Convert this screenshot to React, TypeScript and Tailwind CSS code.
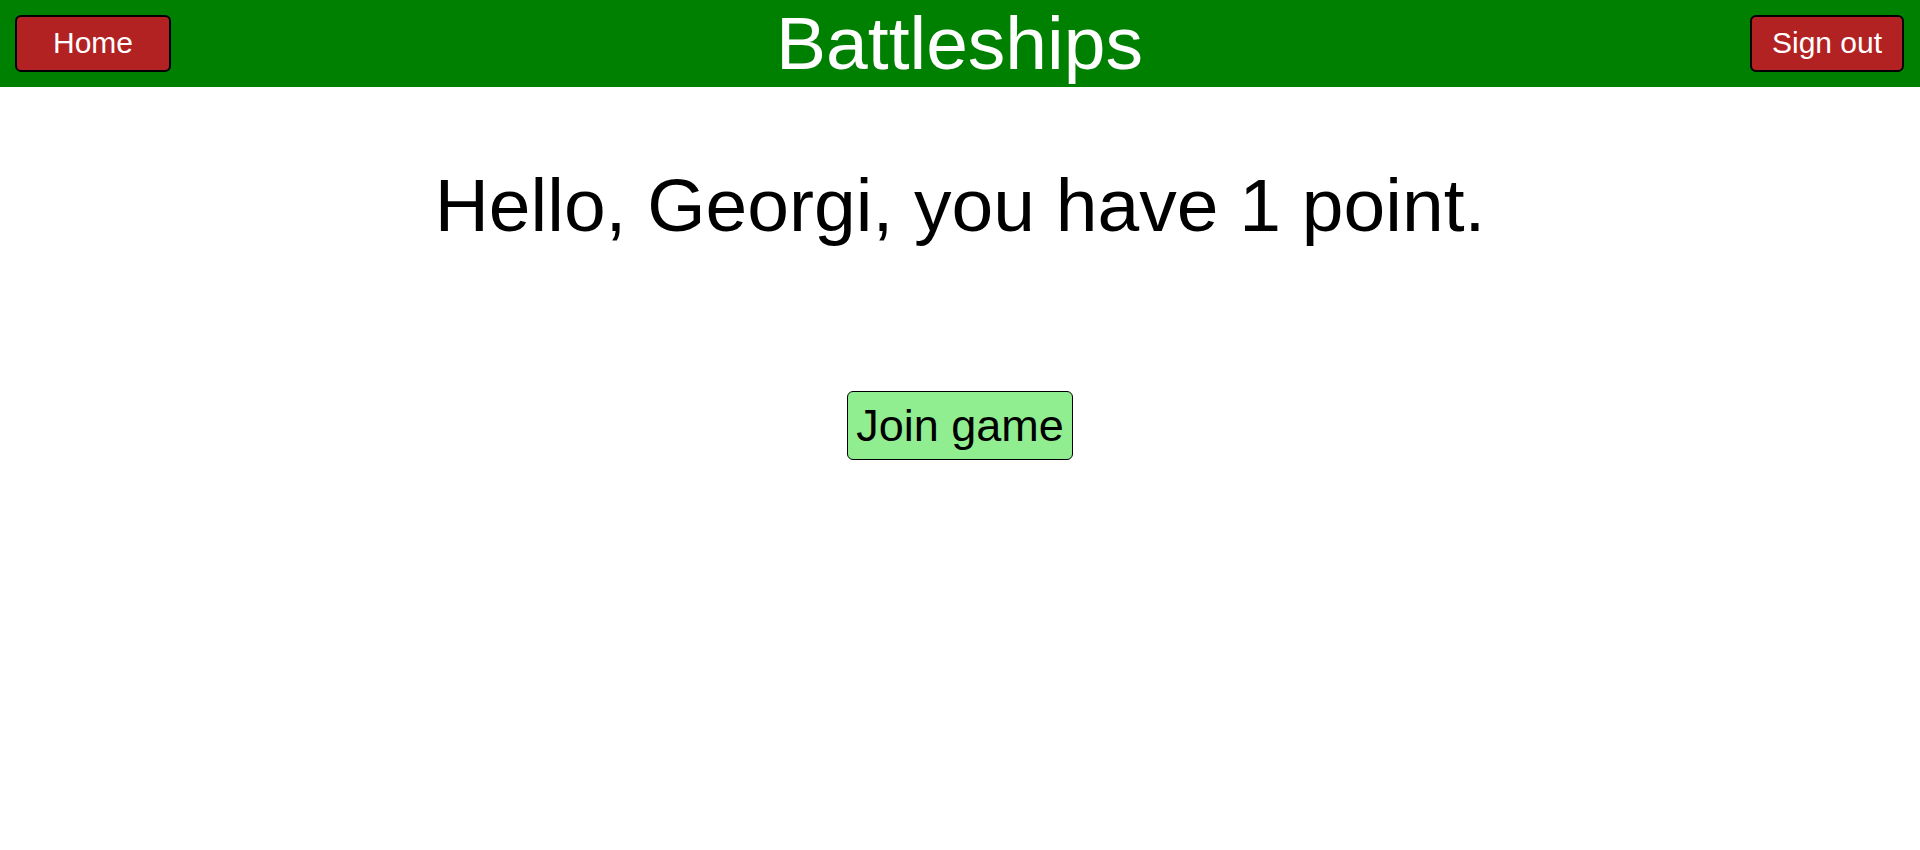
export default function App() {
  return (
    <div className="min-h-[850px] bg-white font-['Liberation_Sans',Arial,sans-serif]">
      <header className="grid h-[87px] grid-cols-[1fr_auto_1fr] items-center bg-[#008000] pl-[15px] pr-[16px]">
        <div className="flex justify-start">
          <button className="flex h-[57px] w-[156px] items-center justify-center rounded-[6px] border-2 border-black bg-[#b22222] pb-[2px] text-[30px] leading-none text-white">
            Home
          </button>
        </div>
        <h1 className="text-[75px] leading-[87px] text-white">Battleships</h1>
        <div className="flex justify-end">
          <button className="flex h-[57px] w-[154px] items-center justify-center rounded-[6px] border-2 border-black bg-[#b22222] pb-[2px] text-[30px] leading-none text-white">
            Sign out
          </button>
        </div>
      </header>
      <main className="flex flex-col items-center">
        <h2 className="mt-[75px] text-[75px] leading-[87px] text-black">Hello, Georgi, you have 1 point.</h2>
        <button className="mt-[142px] flex h-[69px] w-[226px] items-center justify-center rounded-[6px] border border-black bg-[#90ee90] text-[45px] leading-none text-black">
          Join game
        </button>
      </main>
    </div>
  );
}
